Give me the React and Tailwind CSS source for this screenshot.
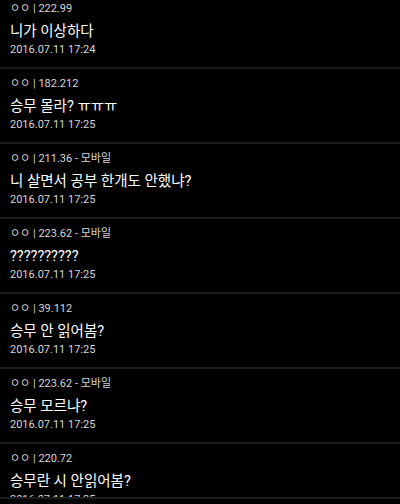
import React from 'react';

const posts = [
  { nick: 'ㅇㅇ', ip: '222.99', body: '니가 이상하다', date: '2016.07.11 17:24' },
  { nick: 'ㅇㅇ', ip: '182.212', body: '승무 몰라? ㅠㅠㅠ', date: '2016.07.11 17:25' },
  { nick: 'ㅇㅇ', ip: '211.36', mobile: true, body: '니 살면서 공부 한개도 안했냐?', date: '2016.07.11 17:25' },
  { nick: 'ㅇㅇ', ip: '223.62', mobile: true, body: '??????????', date: '2016.07.11 17:25' },
  { nick: 'ㅇㅇ', ip: '39.112', body: '승무 안 읽어봄?', date: '2016.07.11 17:25' },
  { nick: 'ㅇㅇ', ip: '223.62', mobile: true, body: '승무 모르냐?', date: '2016.07.11 17:25' },
  { nick: 'ㅇㅇ', ip: '220.72', body: '승무란 시 안읽어봄?', date: '2016.07.11 17:25' },
];

function CommentRow({ post }) {
  return (
    <li className="border-b-2 border-[#1c1c1c] px-[10px] pt-[7px] pb-[9px]">
      <div className="text-[11px] leading-[16px] text-[#d6d6d6]">
        {post.nick} | {post.ip}{post.mobile && ' - 모바일'}
      </div>
      <div className="mt-[5px] text-[14.5px] leading-[20px] text-white">{post.body}</div>
      <div className="text-[11px] leading-[16px] text-[#d6d6d6]">{post.date}</div>
    </li>
  );
}

export default function App() {
  return (
    <div
      className="w-[400px] h-[504px] bg-black flex flex-col overflow-hidden"
      style={{ fontFamily: 'Roboto, "Noto Sans CJK KR", sans-serif' }}
    >
      <div className="h-[497px] overflow-hidden">
        <ul className="-mt-[6px]">
          {posts.map((p, i) => (
            <CommentRow key={i} post={p} />
          ))}
        </ul>
      </div>
      <div className="h-[2px] bg-[#1c1c1c]" />
    </div>
  );
}
